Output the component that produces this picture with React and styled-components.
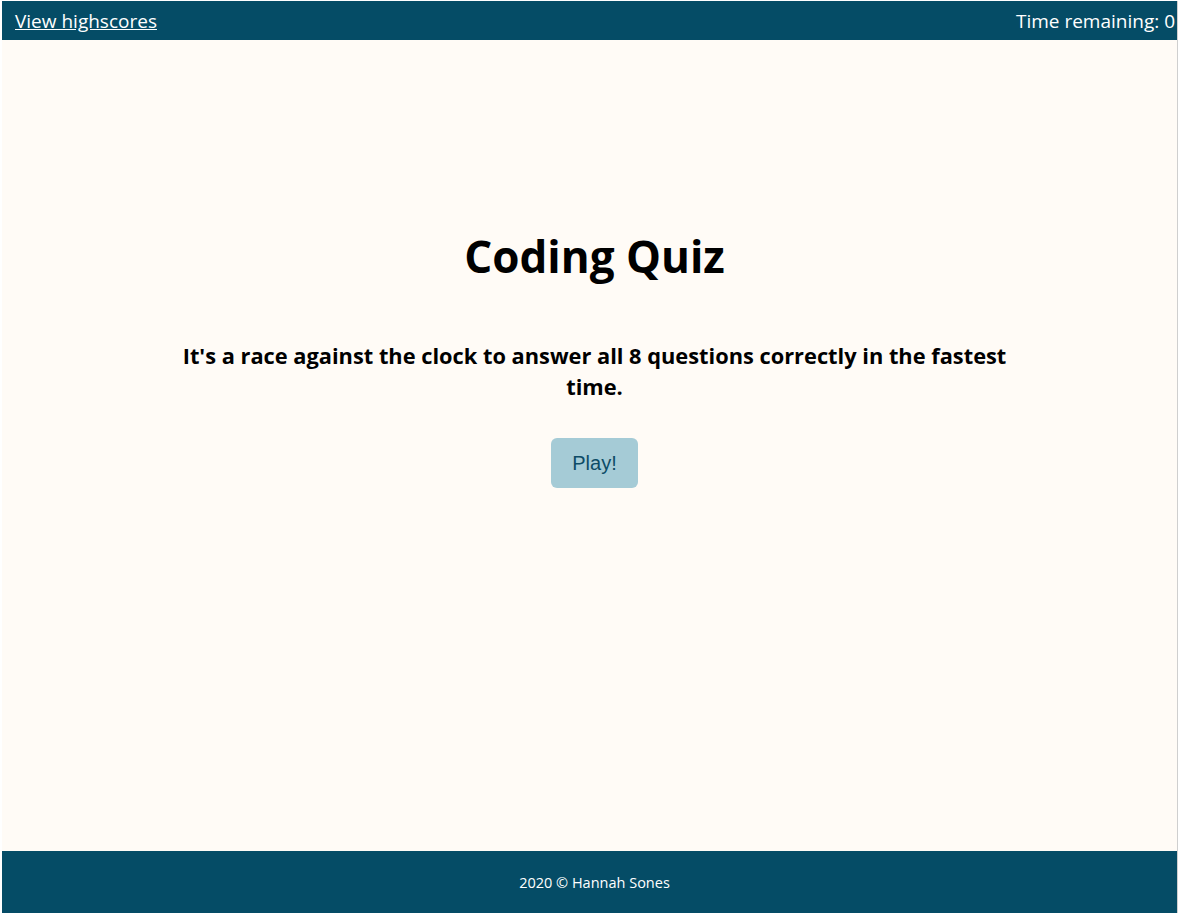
import React from 'react'
import styled, { createGlobalStyle } from 'styled-components'

const GlobalStyle = createGlobalStyle`
  html, body {
    margin: 0;
    padding: 0;
    background: #ffffff;
  }
  body {
    font-family: "Open Sans", "Noto Sans", sans-serif;
  }
`

const Frame = styled.div`
  display: flex;
  padding: 1px 0 0 2px;
  height: 912px;
  overflow: hidden;
`

const Viewport = styled.div`
  width: 1175px;
  overflow: hidden;
  display: flex;
`

const Page = styled.div`
  flex-shrink: 0;
  width: 1185px;
  display: flex;
  flex-direction: column;
  background: #fffbf6;
`

const Edge = styled.div`
  width: 1px;
  background: #cfcfcf;
`

const Header = styled.header`
  height: 39px;
  background: #054c66;
  color: #ffffff;
  display: flex;
  align-items: center;
  justify-content: space-between;
  padding: 0 12px 0 13px;
  font-size: 19px;
`

const HighscoreLink = styled.a`
  color: #ffffff;
  text-decoration: underline;
  cursor: pointer;
`

const Main = styled.main`
  flex: 1;
  display: flex;
  flex-direction: column;
  align-items: center;
  padding-top: 188px;
`

const Title = styled.h1`
  margin: 0;
  font-size: 44px;
  font-weight: 700;
  color: #000000;
  line-height: 1.3;
`

const Intro = styled.p`
  margin: 55px 0 0;
  max-width: 860px;
  text-align: center;
  font-size: 21.8px;
  font-weight: 700;
  line-height: 31px;
  color: #000000;
`

const PlayButton = styled.button`
  margin-top: 36px;
  width: 87px;
  height: 50px;
  border: none;
  border-radius: 6px;
  background: #a5cbd6;
  color: #0d4c66;
  font-family: "Liberation Sans", Arial, sans-serif;
  font-size: 20px;
  cursor: pointer;
`

const Footer = styled.footer`
  height: 62px;
  background: #054c66;
  color: #ffffff;
  display: flex;
  align-items: center;
  justify-content: center;
  font-size: 14.5px;
`

export default function App() {
  return (
    <>
      <GlobalStyle />
      <Frame>
        <Viewport>
          <Page>
            <Header>
              <HighscoreLink>View highscores</HighscoreLink>
              <span>Time remaining: 0</span>
            </Header>
            <Main>
              <Title>Coding Quiz</Title>
              <Intro>It's a race against the clock to answer all 8 questions correctly in the fastest time.</Intro>
              <PlayButton>Play!</PlayButton>
            </Main>
            <Footer>2020 © Hannah Sones</Footer>
          </Page>
        </Viewport>
        <Edge />
      </Frame>
    </>
  )
}
